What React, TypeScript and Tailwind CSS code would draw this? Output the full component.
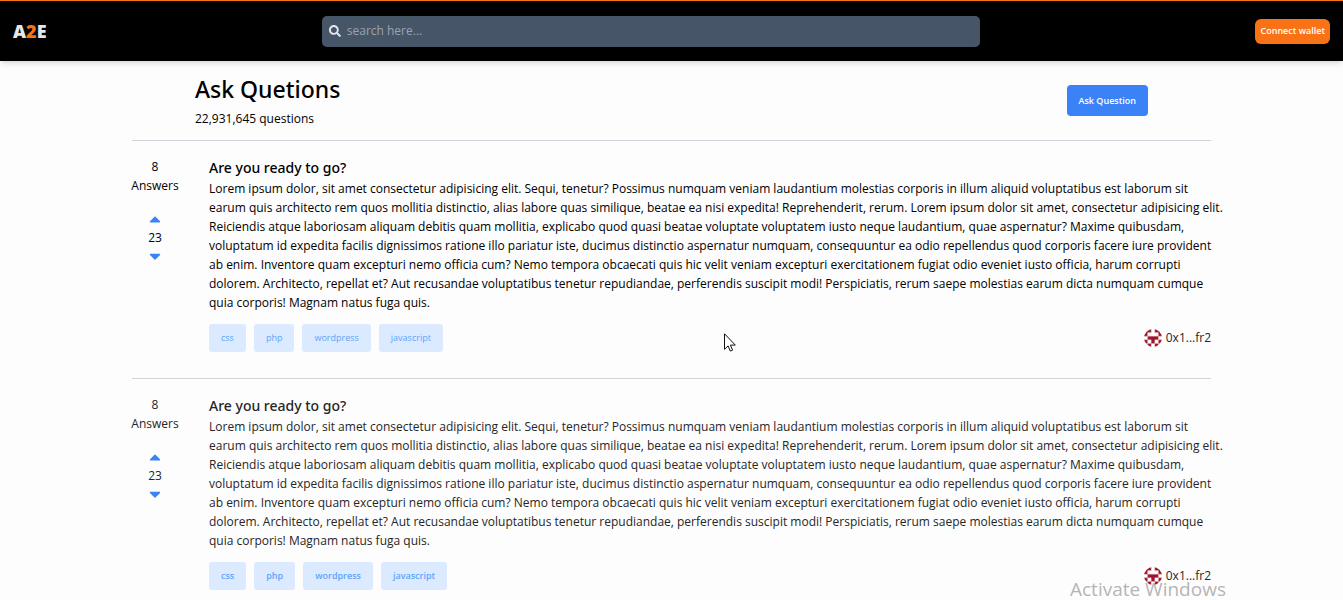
import { FaCaretDown, FaCaretUp, FaSearch } from "react-icons/fa";

const body =
  "Lorem ipsum dolor, sit amet consectetur adipisicing elit. Sequi, tenetur? Possimus numquam veniam laudantium molestias corporis in illum aliquid voluptatibus est laborum sit earum quis architecto rem quos mollitia distinctio, alias labore quas similique, beatae ea nisi expedita! Reprehenderit, rerum. Lorem ipsum dolor sit amet, consectetur adipisicing elit. Reiciendis atque laboriosam aliquam debitis quam mollitia, explicabo quod quasi beatae voluptate voluptatem iusto neque laudantium, quae aspernatur? Maxime quibusdam, voluptatum id expedita facilis dignissimos ratione illo pariatur iste, ducimus distinctio aspernatur numquam, consequuntur ea odio repellendus quod corporis facere iure provident ab enim. Inventore quam excepturi nemo officia cum? Nemo tempora obcaecati quis hic velit veniam excepturi exercitationem fugiat odio eveniet iusto officia, harum corrupti dolorem. Architecto, repellat et? Aut recusandae voluptatibus tenetur repudiandae, perferendis suscipit modi! Perspiciatis, rerum saepe molestias earum dicta numquam cumque quia corporis! Magnam natus fuga quis.";

const tags = ["css", "php", "wordpress", "javascript"];

const questions = [
  { id: 1, textClass: "text-black", tagClass: "font-normal" },
  { id: 2, textClass: "text-neutral-800", tagClass: "font-semibold" },
];

function Avatar() {
  return (
    <svg viewBox="0 0 20 20" className="size-[18px] rounded-full" aria-hidden="true">
      <path d="M0 0h20v20H0z" fill="#fff" />
      <path
        d="M0 0h8v4H4v4H0zM12 0h8v8h-4V4h-4zM4 8h12v4h-4v4H8v-4H4zM0 12h4v4H0zM16 12h4v4h-4zM4 16h4v4H4zM12 16h4v4h-4z"
        fill="#9b1237"
        stroke="#dcb59a"
        strokeWidth="0.5"
      />
    </svg>
  );
}

function Question({ textClass, tagClass }: { textClass: string; tagClass: string }) {
  return (
    <article className={`flex gap-[31px] border-t border-[#d1d5db] pt-4 pb-[26px] ${textClass}`}>
      <div className="flex w-[46px] shrink-0 flex-col items-center text-[12px] leading-[19px]">
        <span>8</span>
        <span>Answers</span>
        <div className="mt-[15px] flex flex-col items-center text-[#3b82f6]">
          <button type="button" aria-label="Vote up" className="flex h-[18px] items-center">
            <FaCaretUp className="size-[18px]" />
          </button>
          <span className={textClass}>23</span>
          <button type="button" aria-label="Vote down" className="flex h-[18px] items-center">
            <FaCaretDown className="size-[18px]" />
          </button>
        </div>
      </div>
      <div className="min-w-0 flex-1">
        <h2 className="font-['Noto_Sans','Open_Sans',sans-serif] text-[14px] leading-[22px] font-medium">
          Are you ready to go?
        </h2>
        <p className="-mr-3 text-[12px] leading-[19px]">{body}</p>
        <div className="mt-3 flex items-center justify-between">
          <ul className="flex gap-2">
            {tags.map((tag) => (
              <li key={tag}>
                <a
                  href="#"
                  className={`flex h-7 items-center rounded-[3px] bg-[#dbeafe] px-3 text-[9px] text-[#60a5fa] ${tagClass}`}
                >
                  {tag}
                </a>
              </li>
            ))}
          </ul>
          <div className="flex items-center gap-1 text-[12px] text-neutral-800">
            <Avatar />
            <span>0x1...fr2</span>
          </div>
        </div>
      </div>
    </article>
  );
}

export default function App() {
  return (
    <div className="relative h-screen overflow-hidden bg-[#fdfdfd] font-['Open_Sans','Noto_Sans',sans-serif]">
      <header className="flex h-[61px] items-center justify-between border-t border-[#f97316] bg-black px-[13px] shadow-md">
        <a href="#" className="text-[18px] font-extrabold text-gray-200">
          A<span className="text-[#f97316]">2</span>E
        </a>
        <label className="flex h-[31px] w-1/2 items-center gap-[6px] rounded-[5px] bg-[#475569] px-[7px] text-gray-200">
          <FaSearch className="size-3" />
          <input
            type="search"
            aria-label="Search"
            placeholder="search here..."
            className="min-w-0 flex-1 bg-transparent text-[12px] outline-none placeholder:text-[#9ca3af]"
          />
        </label>
        <button type="button" className="h-[25px] rounded-md bg-[#f97316] px-[5px] text-[9px] font-semibold text-white">
          Connect wallet
        </button>
      </header>
      <main className="mx-auto max-w-[1079px]">
        <div className="flex items-center justify-between px-[63px] py-3">
          <div>
            <h1 className="font-['Noto_Sans','Open_Sans',sans-serif] text-[23px] leading-8 font-medium">Ask Quetions</h1>
            <p className="mt-1 text-[12px] leading-[19px]">22,931,645 questions</p>
          </div>
          <button type="button" className="h-[31px] rounded bg-[#3b82f6] px-3 text-[9px] font-semibold text-white">
            Ask Question
          </button>
        </div>
        {questions.map(({ id, textClass, tagClass }) => (
          <Question key={id} textClass={textClass} tagClass={tagClass} />
        ))}
      </main>
      <div className="pointer-events-none absolute top-[577px] left-[1070px] text-[19px] leading-6 text-neutral-400/80">
        Activate Windows
      </div>
      <svg viewBox="0 0 12 19" className="absolute top-[333px] left-[724px] h-[19px] w-3" aria-hidden="true">
        <path d="M.5.8v15.500l3.600-3.400 2.200 5.200 2.300-1-2.200-5h4.900z" fill="#fff" stroke="#111" />
      </svg>
    </div>
  );
}
